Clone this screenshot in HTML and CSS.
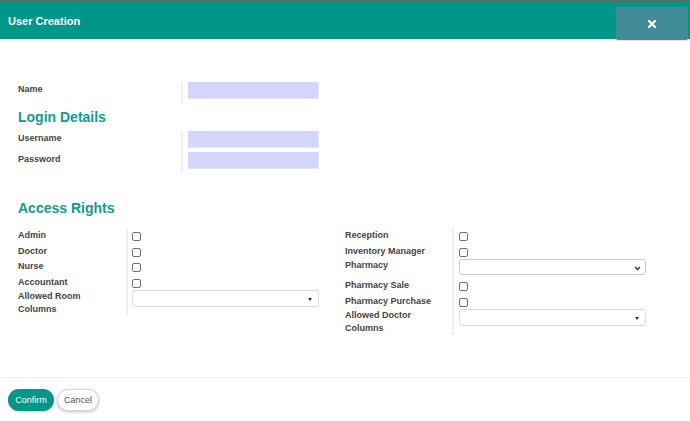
FILE: index.html
```html
<!DOCTYPE html>
<html lang="en">
<head>
<meta charset="utf-8">
<title>User Creation</title>
<link rel="stylesheet" href="styles.css">
</head>
<body>
<div class="strip"></div>
<header class="modal-header">
  <h1 class="title">User Creation</h1>
  <button class="close" type="button" aria-label="Close">
    <svg width="8" height="8" viewBox="0 0 8 8"><path d="M1 1L7 7M7 1L1 7" stroke="#fff" stroke-width="2" stroke-linecap="square"/></svg>
  </button>
</header>
<main class="modal-body">
  <div class="row">
    <label class="lbl">Name</label>
    <div class="fld"><input class="inp" type="text"></div>
  </div>
  <h2 class="section">Login Details</h2>
  <div class="row">
    <label class="lbl">Username</label>
    <div class="fld"><input class="inp" type="text"></div>
  </div>
  <div class="row">
    <label class="lbl">Password</label>
    <div class="fld"><input class="inp" type="password"></div>
  </div>

  <h2 class="section section-access">Access Rights</h2>
  <div class="access">
    <div class="col col-left">
      <div class="arow"><label class="albl">Admin</label><div class="afld"><input class="cb" type="checkbox"></div></div>
      <div class="arow"><label class="albl">Doctor</label><div class="afld"><input class="cb" type="checkbox"></div></div>
      <div class="arow"><label class="albl">Nurse</label><div class="afld"><input class="cb" type="checkbox"></div></div>
      <div class="arow"><label class="albl">Accountant</label><div class="afld"><input class="cb" type="checkbox"></div></div>
      <div class="arow"><label class="albl albl-multi">Allowed Room<br>Columns</label><div class="afld"><div class="sel"><span class="caret"></span></div></div></div>
    </div>
    <div class="col col-right">
      <div class="arow"><label class="albl">Reception</label><div class="afld"><input class="cb" type="checkbox"></div></div>
      <div class="arow"><label class="albl">Inventory Manager</label><div class="afld"><input class="cb" type="checkbox"></div></div>
      <div class="arow"><label class="albl albl-multi">Pharmacy</label><div class="afld"><div class="sel sel-native"><svg class="chev" width="7" height="5" viewBox="0 0 7 5"><path d="M1 1L3.5 3.5L6 1" fill="none" stroke="#333" stroke-width="1.4"/></svg></div></div></div>
      <div class="arow"><label class="albl">Pharmacy Sale</label><div class="afld"><input class="cb" type="checkbox"></div></div>
      <div class="arow"><label class="albl">Pharmacy Purchase</label><div class="afld"><input class="cb" type="checkbox"></div></div>
      <div class="arow"><label class="albl albl-multi">Allowed Doctor<br>Columns</label><div class="afld"><div class="sel"><span class="caret"></span></div></div></div>
    </div>
  </div>
</main>
<footer class="modal-footer">
  <button class="btn btn-primary" type="button">Confirm</button>
  <button class="btn btn-default" type="button">Cancel</button>
</footer>
</body>
</html>
```

FILE: styles.css
```css
* { box-sizing: border-box; }
html, body { margin: 0; padding: 0; background: #fff; }
body {
  font-family: "Liberation Sans", Arial, sans-serif;
  color: #444;
  width: 690px;
  height: 421px;
  overflow: hidden;
}
.strip { height: 2px; background: #666; }
.modal-header {
  height: 37px;
  background: #009688;
  display: flex;
  align-items: center;
  justify-content: space-between;
  padding-left: 8px;
  padding-right: 2px;
}
.title {
  margin: 0;
  font-size: 11px;
  font-weight: bold;
  color: #fff;
}
.close {
  align-self: flex-start;
  margin-top: 5px;
  margin-bottom: -1px;
  width: 72px;
  height: 33px;
  border: none;
  border-radius: 2px;
  background: #418c96;
  display: flex;
  align-items: center;
  justify-content: center;
  padding: 0;
  box-shadow: 0 1px 1px rgba(0,0,0,0.12);
}
.modal-body {
  padding: 43px 0 0 18px;
}
.row {
  display: grid;
  grid-template-columns: 163px 1fr;
}
.lbl {
  font-size: 9px;
  font-weight: bold;
  line-height: 13px;
  padding-top: 1px;
  color: #444;
}
.fld {
  border-left: 2px solid #eeeeee;
  padding: 0 0 4px 5px;
}
.inp {
  display: block;
  margin: 0;
  width: 131px;
  height: 17px;
  background: #d3d5fb;
  border: 1px solid #e4e4ee;
  border-top-color: #d3d5fb;
  border-left-color: #d3d5fb;
  padding: 0 4px;
  font: inherit;
  outline: none;
}
.section {
  margin: 5px 0 5px;
  font-size: 14px;
  line-height: 18px;
  font-weight: bold;
  color: #119b8b;
}
.section-access {
  margin-top: 26px;
  margin-bottom: 11px;
}
.access { display: flex; }
.col-left { width: 327px; }
.col-right { width: 301px; }
.arow {
  display: grid;
  grid-template-columns: 108px 1fr;
}
.col-right .arow { grid-template-columns: 107px 1fr; }
.albl {
  font-size: 9px;
  font-weight: bold;
  line-height: 13px;
  padding-top: 1px;
  color: #444;
}
.albl-multi { padding-top: 0; }
.afld {
  border-left: 2px solid #eeeeee;
  padding-left: 4px;
}
.col-right .afld { padding-left: 5px; }
.cb {
  -webkit-appearance: none;
  appearance: none;
  display: block;
  width: 9px;
  height: 9px;
  margin: 4px 0 2.5px 0;
  border: 1px solid #707070;
  border-radius: 2px;
  background: #fff;
}
.sel {
  position: relative;
  width: 187px;
  height: 17px;
  border: 1px solid #dcdcdc;
  border-radius: 3px;
  background: #fff;
  margin-bottom: 9px;
}
.sel-native {
  height: 16px;
  margin-bottom: 3px;
  border-color: #c8c8c8;
}
.caret {
  position: absolute;
  right: 6px;
  top: 7px;
  width: 0;
  height: 0;
  border-left: 2.5px solid transparent;
  border-right: 2.5px solid transparent;
  border-top: 3px solid #333;
}
.chev {
  position: absolute;
  right: 4px;
  top: 6px;
}
.modal-footer {
  margin-top: 42px;
  border-top: 1px solid #eeeeee;
  padding: 11px 8px;
  display: flex;
  gap: 4px;
}
.btn {
  height: 22px;
  border-radius: 11px;
  font-family: "Liberation Sans", Arial, sans-serif;
  font-size: 9px;
  padding: 0;
  cursor: pointer;
}
.btn-primary {
  width: 46px;
  background: #009688;
  color: #fff;
  border: none;
  box-shadow: 0 1px 2px rgba(0,0,0,0.2);
}
.btn-default {
  width: 42px;
  margin-left: -1px;
  background: #fff;
  color: #555;
  border: 1px solid #d6d6d6;
  box-shadow: 0 1px 3px rgba(0,0,0,0.25);
}
```
